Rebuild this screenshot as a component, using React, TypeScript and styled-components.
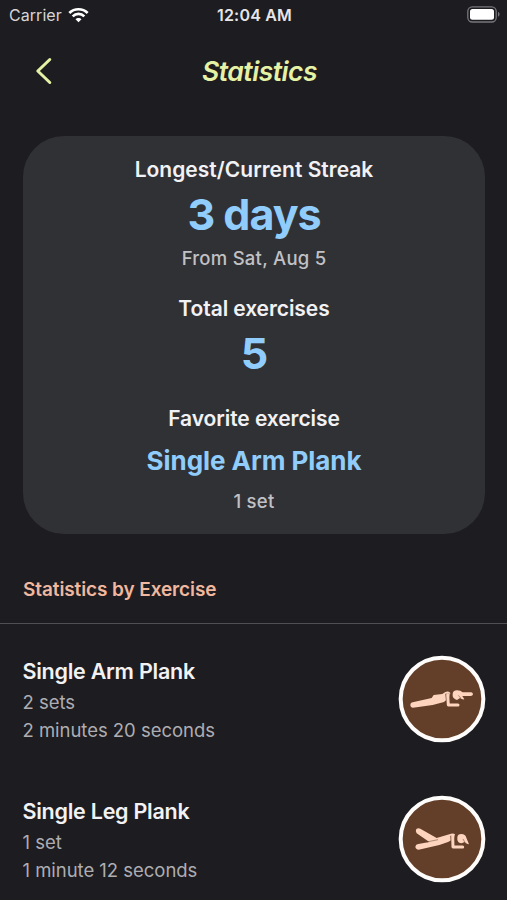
import React from 'react';
import styled, { createGlobalStyle } from 'styled-components';

const color = {
  page: '#1d1c20',
  card: '#303135',
  lime: '#e5f2a5',
  blue: '#90cdfc',
  peach: '#efb89f',
  text: '#f2f2f5',
  muted: '#c1c1c5',
  line: '#504f54',
  brown: '#633e29',
  skin: '#fdd5bf',
};

const GlobalStyle = createGlobalStyle`
  * { box-sizing: border-box; }
  body {
    margin: 0;
    background: ${color.page};
    color: ${color.text};
    font-family: Inter, "Liberation Sans", sans-serif;
  }
  h1, h2, h3, p { margin: 0; }
`;

const Screen = styled.main`
  width: 100%;
  max-width: 507px;
  height: 900px;
  overflow: hidden;
  background: ${color.page};
  white-space: nowrap;
`;

const StatusBar = styled.div`
  display: grid;
  grid-template-columns: 1fr auto 1fr;
  align-items: center;
  height: 30px;
  padding: 0 7px 0 9px;
`;

const Carrier = styled.div`
  display: flex;
  align-items: center;
  gap: 6px;
  color: #d5d5d8;
  font-size: 16px;
  letter-spacing: 0.05px;
`;

const Clock = styled.time`
  color: #e6e6e9;
  font-size: 16px;
  font-weight: 600;
  letter-spacing: 0.2px;
`;

const BatteryIcon = styled.svg`
  justify-self: end;
  margin-top: -2px;
`;

const Header = styled.header`
  display: grid;
  grid-template-columns: 80px 1fr 80px;
  align-items: center;
  height: 82px;
  color: ${color.lime};
`;

const BackButton = styled.button`
  display: flex;
  height: 44px;
  padding: 8px 0 0 34px;
  border: 0;
  background: none;
  color: inherit;
`;

const Title = styled.h1`
  padding-left: 12px;
  text-align: center;
  font-size: 26.5px;
  font-style: italic;
  font-weight: 600;
  letter-spacing: -0.5px;
`;

const Card = styled.section`
  display: flex;
  flex-direction: column;
  gap: 24px;
  height: 398px;
  margin: 24px 22px 0 23px;
  padding-top: 20px;
  border-radius: 41px;
  background: ${color.card};
  text-align: center;
`;

const Stat = styled.div`
  display: flex;
  flex-direction: column;
`;

const StatLabel = styled.h2<{ $spacing?: number }>`
  font-size: 21px;
  font-weight: 560;
  line-height: 28px;
  letter-spacing: ${(p) => p.$spacing ?? -0.07}px;
`;

const StatValue = styled.p<{ $compact?: boolean }>`
  color: ${color.blue};
  font-size: ${(p) => (p.$compact ? 26 : 43)}px;
  font-weight: ${(p) => (p.$compact ? 650 : 700)};
  line-height: ${(p) => (p.$compact ? 55 : 61)}px;
  letter-spacing: ${(p) => (p.$compact ? -0.05 : -1)}px;
`;

const StatNote = styled.p`
  color: ${color.muted};
  font-size: 18.5px;
  font-weight: 540;
  line-height: 26px;
  letter-spacing: 0.25px;
`;

const FavoriteStat = styled(Stat)`
  margin-top: -3px;
`;

const SectionTitle = styled.h2`
  height: 90px;
  padding: 43px 23px 0;
  border-bottom: 1px solid ${color.line};
  color: ${color.peach};
  font-size: 19px;
  font-weight: 600;
  line-height: 26px;
  letter-spacing: -0.1px;
`;

const ExerciseList = styled.ul`
  margin: 0;
  padding: 4px 21px 0 23px;
  list-style: none;
`;

const ExerciseRow = styled.li`
  display: flex;
  align-items: center;
  justify-content: space-between;
  height: 140px;
`;

const ExerciseInfo = styled.div`
  margin-left: -0.5px;
  padding-top: 2px;
`;

const ExerciseName = styled.h3`
  font-size: 21.5px;
  font-weight: 600;
  line-height: 34px;
  letter-spacing: -0.25px;
`;

const ExerciseDetail = styled.p`
  color: #adadb2;
  font-size: 18.5px;
  line-height: 28px;
  letter-spacing: -0.03px;
`;

const BadgeSvg = styled.svg`
  display: block;
  flex: none;
  margin-top: 1px;
`;

const WifiIcon = () => (
  <svg width="21" height="16" viewBox="0 0 63 48" fill="none" stroke="#fff" strokeWidth="8">
    <path d="M4 18C19 3 44 3 59 18" />
    <path d="M14 28C24 18 39 18 49 28" />
    <path d="M31.500 46L22.500 37C27 32 36 32 40.500 37Z" fill="#fff" stroke="none" />
  </svg>
);

const Battery = () => (
  <BatteryIcon width="33" height="17" viewBox="0 0 33 17">
    <rect x="0.800" y="0.800" width="28.400" height="15.200" rx="4.500" fill="none" stroke="#77767b" strokeWidth="1.300" />
    <rect x="3" y="3" width="24" height="10.800" rx="2.500" fill="#fff" />
    <path d="M31 6C33 6.500 33 10 31 10.700Z" fill="#77767b" />
  </BatteryIcon>
);

const Figure = ({ pose }: { pose: 'arm' | 'leg' }) => (
  <BadgeSvg width="88" height="88" viewBox="26 31 264 264">
    <circle cx="158" cy="163" r="124" fill={color.brown} stroke="#fffdfb" strokeWidth="12" />
    {pose === 'arm' ? (
      <g fill={color.skin}>
        <path d="M70 173L127 160L133 151L159 148L168 142Q177 138 183 145L180 158L164 172L130 181L71 189Q63 188 63 180Q63 174 70 173Z" />
        <path d="M174 147L177 181H206" fill="none" stroke={color.brown} strokeWidth="12" strokeLinejoin="round" />
        <path d="M175 150L177 181H206" fill="none" stroke={color.skin} strokeWidth="9" strokeLinecap="round" strokeLinejoin="round" />
        <path d="M190 147Q192 137 203 137Q214 137 220 143H246Q251 144 251 149Q250 154 244 154H219L225 164Q218 165 212 160L203 166Q191 162 190 154Z" />
        <path d="M207 152L214 160" stroke={color.brown} strokeWidth="1.500" />
      </g>
    ) : (
      <g fill={color.skin}>
        <path d="M93 132L142 160L180 149Q191 144 197 149L194 162L176 172L150 181L88 195Q79 194 78 186Q79 179 87 178L120 172L82 146Q77 139 81 133Q87 129 93 132Z" />
        <path d="M112 172L146 165" stroke={color.brown} strokeWidth="1.500" />
        <path d="M189 153L191 187H220" fill="none" stroke={color.brown} strokeWidth="12" strokeLinejoin="round" />
        <path d="M190 154L191 187H220" fill="none" stroke={color.skin} strokeWidth="9" strokeLinecap="round" strokeLinejoin="round" />
        <path d="M204 158Q205 148 216 148Q228 148 231 159L239 179Q233 179 226 172L217 176Q205 174 204 165Z" />
        <path d="M221 163L226 172" fill="none" stroke={color.brown} strokeWidth="1.500" />
      </g>
    )}
  </BadgeSvg>
);

const exercises = [
  { name: 'Single Arm Plank', sets: '2 sets', time: '2 minutes 20 seconds', pose: 'arm' as const },
  { name: 'Single Leg Plank', sets: '1 set', time: '1 minute 12 seconds', pose: 'leg' as const },
];

export default function App() {
  return (
    <>
      <GlobalStyle />
      <Screen>
        <StatusBar>
          <Carrier>
            Carrier
            <WifiIcon />
          </Carrier>
          <Clock>12:04 AM</Clock>
          <Battery />
        </StatusBar>
        <Header>
          <BackButton aria-label="Back">
            <svg width="20" height="28" viewBox="0 0 20 28" fill="none" stroke="currentColor" strokeWidth="3" strokeLinecap="round" strokeLinejoin="round">
              <path d="M15.800 2.500L3.800 14L15.800 25.500" />
            </svg>
          </BackButton>
          <Title>Statistics</Title>
        </Header>
        <Card>
          <Stat>
            <StatLabel $spacing={0.02}>Longest/Current Streak</StatLabel>
            <StatValue>3 days</StatValue>
            <StatNote>From Sat, Aug 5</StatNote>
          </Stat>
          <Stat>
            <StatLabel>Total exercises</StatLabel>
            <StatValue>5</StatValue>
          </Stat>
          <FavoriteStat>
            <StatLabel>Favorite exercise</StatLabel>
            <StatValue $compact>Single Arm Plank</StatValue>
            <StatNote>1 set</StatNote>
          </FavoriteStat>
        </Card>
        <SectionTitle>Statistics by Exercise</SectionTitle>
        <ExerciseList>
          {exercises.map((e) => (
            <ExerciseRow key={e.name}>
              <ExerciseInfo>
                <ExerciseName>{e.name}</ExerciseName>
                <ExerciseDetail>{e.sets}</ExerciseDetail>
                <ExerciseDetail>{e.time}</ExerciseDetail>
              </ExerciseInfo>
              <Figure pose={e.pose} />
            </ExerciseRow>
          ))}
        </ExerciseList>
      </Screen>
    </>
  );
}
